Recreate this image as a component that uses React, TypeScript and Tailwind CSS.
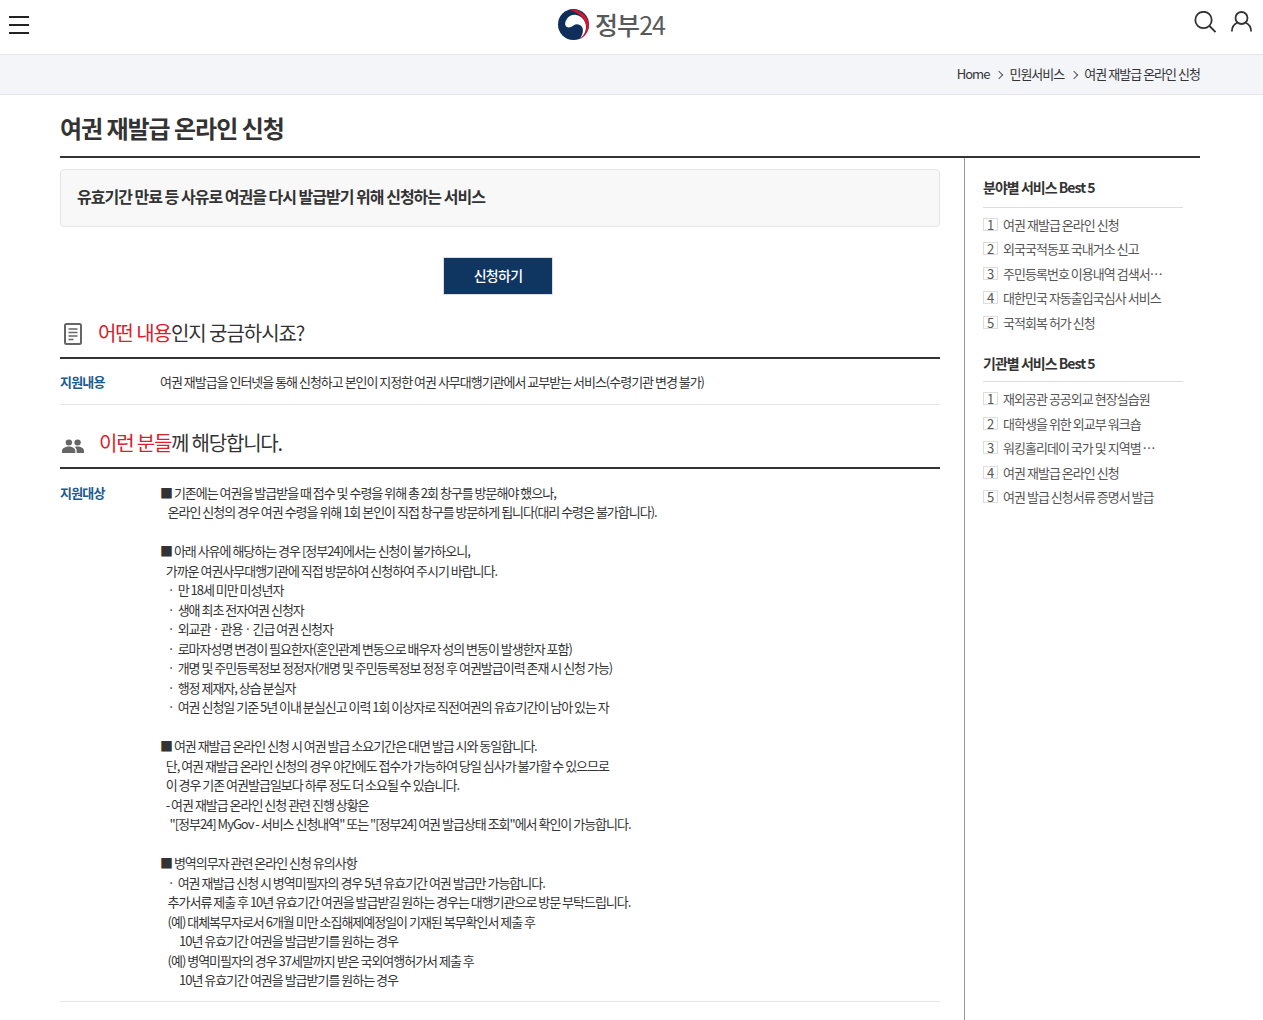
const font = "font-['Noto_Sans_CJK_KR','Noto_Sans',sans-serif]";

const fieldBest = [
  "여권 재발급 온라인 신청",
  "외국국적동포 국내거소 신고",
  "주민등록번호 이용내역 검색서…",
  "대한민국 자동출입국심사 서비스",
  "국적회복 허가 신청",
];

const agencyBest = [
  "재외공관 공공외교 현장실습원",
  "대학생을 위한 외교부 워크숍",
  "워킹홀리데이 국가 및 지역별 …",
  "여권 재발급 온라인 신청",
  "여권 발급 신청서류 증명서 발급",
];

const targetLines = [
  "■ 기존에는 여권을 발급받을 때 접수 및 수령을 위해 총 2회 창구를 방문해야 했으나,",
  "    온라인 신청의 경우 여권 수령을 위해 1회 본인이 직접 창구를 방문하게 됩니다(대리 수령은 불가합니다).",
  "",
  "■ 아래 사유에 해당하는 경우 [정부24]에서는 신청이 불가하오니,",
  "   가까운 여권사무대행기관에 직접 방문하여 신청하여 주시기 바랍니다.",
  "    ·  만 18세 미만 미성년자",
  "    ·  생애 최초 전자여권 신청자",
  "    ·  외교관 · 관용 · 긴급 여권 신청자",
  "    ·  로마자성명 변경이 필요한자(혼인관계 변동으로 배우자 성의 변동이 발생한자 포함)",
  "    ·  개명 및 주민등록정보 정정자(개명 및 주민등록정보 정정 후 여권발급이력 존재 시 신청 가능)",
  "    ·  행정 제재자, 상습 분실자",
  "    ·  여권 신청일 기준 5년 이내 분실신고 이력 1회 이상자로 직전여권의 유효기간이 남아 있는 자",
  "",
  "■ 여권 재발급 온라인 신청 시 여권 발급 소요기간은 대면 발급 시와 동일합니다.",
  "   단, 여권 재발급 온라인 신청의 경우 야간에도 접수가 가능하여 당일 심사가 불가할 수 있으므로",
  "   이 경우 기존 여권발급일보다 하루 정도 더 소요될 수 있습니다.",
  "   - 여권 재발급 온라인 신청 관련 진행 상황은",
  '     "[정부24] MyGov - 서비스 신청내역" 또는 "[정부24] 여권 발급상태 조회"에서 확인이 가능합니다.',
  "",
  "■ 병역의무자 관련 온라인 신청 유의사항",
  "    ·  여권 재발급 신청 시 병역미필자의 경우 5년 유효기간 여권 발급만 가능합니다.",
  "    추가서류 제출 후 10년 유효기간 여권을 발급받길 원하는 경우는 대행기관으로 방문 부탁드립니다.",
  "    (예) 대체복무자로서 6개월 미만 소집해제예정일이 기재된 복무확인서 제출 후",
  "          10년 유효기간 여권을 발급받기를 원하는 경우",
  "    (예) 병역미필자의 경우 37세말까지 받은 국외여행허가서 제출 후",
  "          10년 유효기간 여권을 발급받기를 원하는 경우",
];

function Taegeuk() {
  return (
    <svg width="31" height="31" viewBox="0 0 31 31" aria-hidden="true">
      <circle cx="15.500" cy="15.500" r="15.500" fill="#0f2f5a" />
      <path d="M7 15C8 8 14 5 18 6c6 1 10 6 10 12 0 5-2 9-6 12 2.500-4 4-9 2-12-2-3-6-3.500-8.500-1.500C13 18.500 8 20 7 15z" fill="#fff" />
      <path d="M11 .7C20-1 30 6 30.800 14.500 31.500 21 28 27 22 30 26.500 26 28.800 21 28.300 17 27.300 9 20 3 11 .7z" fill="#d9152f" />
    </svg>
  );
}

function BestList({
  title,
  items,
  titleHeight,
  listGap,
}: {
  title: string;
  items: string[];
  titleHeight: string;
  listGap: string;
}) {
  return (
    <div>
      <h3 className={`${titleHeight} border-b border-[#dddddd] text-[14px] leading-[21px] font-bold tracking-[-0.07em] text-[#333333]`}>
        {title}
      </h3>
      <ul className={listGap}>
        {items.map((item, i) => (
          <li key={item} className="flex h-[24.500px] items-center text-[13px] tracking-[-0.075em] text-[#555555]">
            <span className="mr-[5px] flex h-[13px] w-[15px] shrink-0 items-center justify-center border border-[#dddddd] text-[13px] leading-none tracking-normal">
              {i + 1}
            </span>
            <span className="whitespace-nowrap">{item}</span>
          </li>
        ))}
      </ul>
    </div>
  );
}

export default function App() {
  return (
    <div className={`${font} h-[1020px] overflow-hidden bg-white text-[#333333]`}>
      <header className="flex h-[55px] items-center justify-between border-b border-[#e5e5e5] pr-[11px] pl-[9px]">
        <div className="mb-[4px] flex w-[20px] flex-col gap-[6px]">
          <span className="h-[2px] bg-[#222222]" />
          <span className="h-[2px] bg-[#222222]" />
          <span className="h-[2px] bg-[#222222]" />
        </div>
        <div className="mb-[5px] flex items-center gap-[6px]">
          <Taegeuk />
          <span className="text-[25px] leading-none font-medium tracking-[-0.04em] text-[#58595b]">
            정부<span className="font-normal">24</span>
          </span>
        </div>
        <div className="mb-[11px] flex items-center gap-[15px]">
          <svg width="22" height="22" viewBox="0 0 22 22" fill="none" stroke="#333333" strokeWidth="1.800">
            <circle cx="9.500" cy="9" r="8.200" />
            <path d="M15.500 15l6 6" />
          </svg>
          <svg width="21" height="21" viewBox="0 0 21 21" fill="none" stroke="#333333" strokeWidth="1.800">
            <circle cx="10.500" cy="7" r="6" />
            <path d="M.9 20.500c0-5 3.400-8 5.600-9M20.100 20.500c0-5-3.400-8-5.600-9" />
          </svg>
        </div>
      </header>

      <div className="flex h-[40px] items-center justify-end gap-[7px] border-b border-[#e5e5e5] bg-[#f4f5f9] pr-[63px] pb-[2px] text-[13px] tracking-[-0.075em] text-[#333333]">
        <span>Home</span>
        <span className="mt-[2px] h-[6px] w-[6px] rotate-45 border-t border-r border-[#555555]" />
        <span>민원서비스</span>
        <span className="mt-[2px] h-[6px] w-[6px] rotate-45 border-t border-r border-[#555555]" />
        <span>여권 재발급 온라인 신청</span>
      </div>

      <main className="mx-[60px] w-[1140px]">
        <h1 className="flex h-[63px] items-center border-b-2 border-[#333333] pt-[4px] text-[24px] font-bold tracking-[-0.043em] text-[#333333]">
          여권 재발급 온라인 신청
        </h1>
        <div className="flex">
          <div className="w-[880px] pt-[11px]">
            <div className="flex h-[58px] items-center rounded-[4px] border border-[#e5e5e5] bg-[#f8f8f8] px-[16px] pb-[5px] text-[16px] font-bold tracking-[-0.0625em] text-[#333333]">
              유효기간 만료 등 사유로 여권을 다시 발급받기 위해 신청하는 서비스
            </div>
            <div className="mt-[30px] flex justify-center">
              <button className="mr-[4px] h-[38px] w-[110px] border border-[#dddddd] bg-[#0f3660] pb-[2px] text-[14px] font-medium tracking-[-0.05em] text-white">
                신청하기
              </button>
            </div>

            <h2 className="mt-[16px] flex h-[48px] items-center border-b-2 border-[#333333] pb-[3px] text-[20px] tracking-[-0.052em] text-[#333333]">
              <svg className="mt-[3px] mr-[16px] ml-[4px]" width="18" height="22" viewBox="0 0 18 22" fill="none" stroke="#666666">
                <rect x="1" y="1" width="16" height="20" rx="1.500" strokeWidth="2" />
                <path d="M4.500 6h9M4.500 9.500h9M4.500 13h9M4.500 16.500h5" strokeWidth="1.600" />
              </svg>
              <span className="text-[#d9202c]">어떤 내용</span>
              <span>인지 궁금하시죠?</span>
            </h2>
            <div className="flex h-[46px] items-center border-b border-[#e5e5e5] text-[13px] tracking-[-0.078em]">
              <span className="w-[100px] font-bold tracking-[-0.06em] text-[#1b5a8f]">지원내용</span>
              <span>여권 재발급을 인터넷을 통해 신청하고 본인이 지정한 여권 사무대행기관에서 교부받는 서비스(수령기관 변경 불가)</span>
            </div>

            <h2 className="mt-[15px] flex h-[49px] items-center border-b-2 border-[#333333] pb-px text-[20px] tracking-[-0.06em] text-[#333333]">
              <svg className="mt-[5px] mr-[15px] ml-[2px]" width="22" height="14" viewBox="0 0 24 16" fill="#666666" preserveAspectRatio="none">
                <circle cx="7.500" cy="4" r="3.500" />
                <circle cx="17" cy="4" r="3.500" />
                <path d="M0 16v-2.500C0 10.500 4 8.500 7.500 8.500s7 2 7 5V16zM16 16v-2.500c0-2-.8-3.400-2-4.500 1-.4 2-.5 3-.5 3.500 0 7 2 7 5V16z" />
              </svg>
              <span className="text-[#d9202c]">이런 분들</span>
              <span>께 해당합니다.</span>
            </h2>
            <div className="flex border-b border-[#e5e5e5] pt-[13.500px] pb-[11.500px] text-[13px] leading-[19.500px] tracking-[-0.078em]">
              <span className="w-[100px] shrink-0 font-bold tracking-[-0.06em] text-[#1b5a8f]">지원대상</span>
              <div className="whitespace-pre">
                {targetLines.map((line, i) => (
                  <div key={i} className="h-[19.500px]">
                    {line}
                  </div>
                ))}
              </div>
            </div>
          </div>

          <aside className="ml-[24px] h-[870px] w-[236px] border-l border-[#999999] pt-[19px] pl-[18px]">
            <div className="w-[200px]">
              <BestList title="분야별 서비스 Best 5" items={fieldBest} titleHeight="h-[31px]" listGap="mt-[4px]" />
              <div className="mt-[18px]">
                <BestList title="기관별 서비스 Best 5" items={agencyBest} titleHeight="h-[29px]" listGap="mt-[5px]" />
              </div>
            </div>
          </aside>
        </div>
      </main>
    </div>
  );
}
